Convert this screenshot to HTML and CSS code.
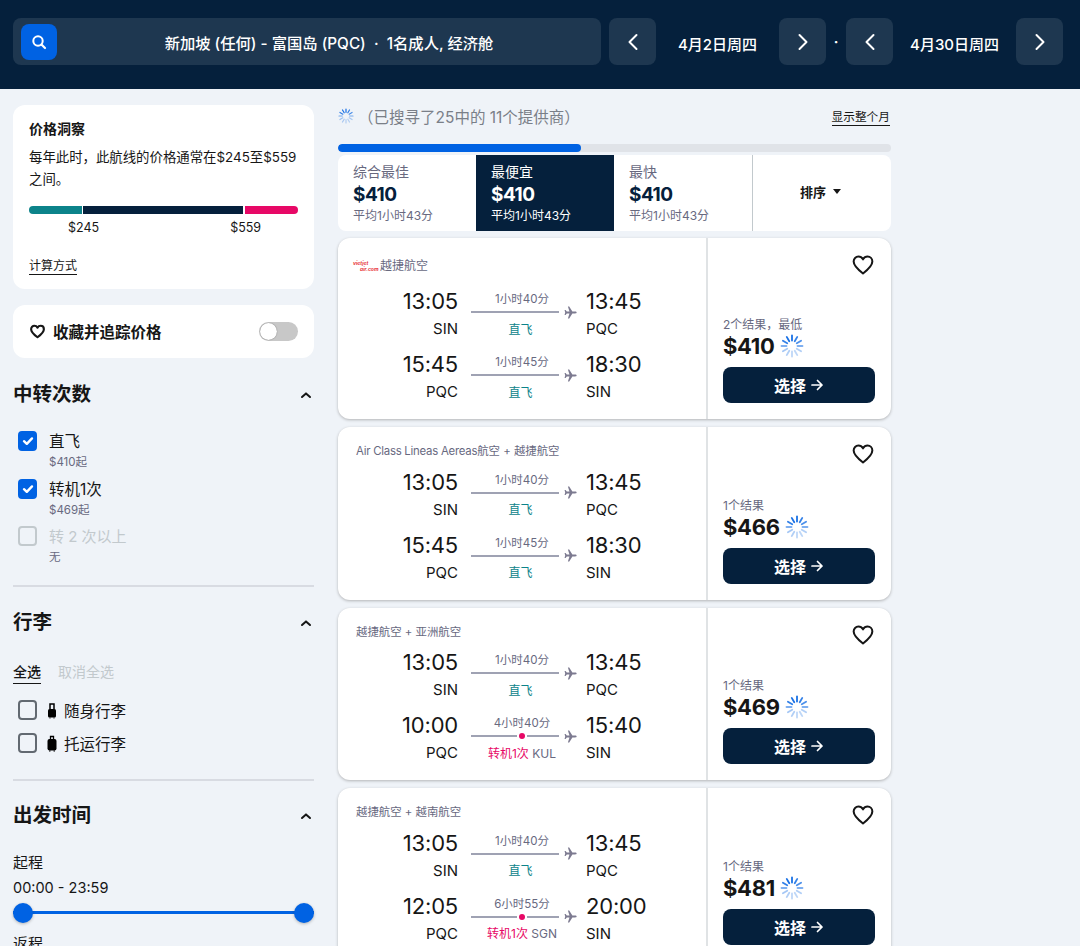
FILE: index.html
```html
<!DOCTYPE html>
<html lang="zh">
<head>
<meta charset="utf-8">
<title>新加坡 - 富国岛 航班</title>
<link rel="stylesheet" href="styles.css">
</head>
<body>
<svg class="defs" width="0" height="0">
	<symbol id="spin" viewBox="0 0 24 24">
		<g stroke="#0062e3" stroke-width="1.8" stroke-linecap="round">
			<line x1="12" y1="1.5" x2="12" y2="6.5" opacity=".9"/>
			<line x1="12" y1="1.5" x2="12" y2="6.5" opacity=".8" transform="rotate(30 12 12)"/>
			<line x1="12" y1="1.5" x2="12" y2="6.5" opacity=".7" transform="rotate(60 12 12)"/>
			<line x1="12" y1="1.5" x2="12" y2="6.5" opacity=".5" transform="rotate(90 12 12)"/>
			<line x1="12" y1="1.5" x2="12" y2="6.5" opacity=".3" transform="rotate(120 12 12)"/>
			<line x1="12" y1="1.5" x2="12" y2="6.5" opacity=".25" transform="rotate(150 12 12)"/>
			<line x1="12" y1="1.5" x2="12" y2="6.5" opacity=".25" transform="rotate(180 12 12)"/>
			<line x1="12" y1="1.5" x2="12" y2="6.5" opacity=".3" transform="rotate(210 12 12)"/>
			<line x1="12" y1="1.5" x2="12" y2="6.5" opacity=".35" transform="rotate(240 12 12)"/>
			<line x1="12" y1="1.5" x2="12" y2="6.5" opacity=".5" transform="rotate(270 12 12)"/>
			<line x1="12" y1="1.5" x2="12" y2="6.5" opacity=".8" transform="rotate(300 12 12)"/>
			<line x1="12" y1="1.5" x2="12" y2="6.5" opacity=".9" transform="rotate(330 12 12)"/>
		</g>
	</symbol>
	<symbol id="plane" viewBox="0 0 14 14">
		<path fill="#7c7a90" d="M13.6 7c0-.6-.7-1-1.6-1H9L5.6.6H4.2L5.9 6H3L1.7 4.4H.6L1.3 7 .6 9.6h1.1L3 8h2.9L4.2 13.4h1.4L9 8h3c.9 0 1.6-.4 1.6-1z"/>
	</symbol>
	<symbol id="heart" viewBox="0 0 24 24">
		<path fill="none" stroke="#161616" stroke-linejoin="round" d="M12 21.2C5.6 16.3 1.8 12.6 1.8 8.2 1.8 5 4.2 2.8 7 2.8c2 0 3.8 1 5 3 1.2-2 3-3 5-3 2.8 0 5.2 2.2 5.2 5.4 0 4.4-3.8 8.1-10.2 13z"/>
	</symbol>
	<symbol id="chev" viewBox="0 0 12 8">
		<path fill="none" stroke="#161616" stroke-width="2" stroke-linecap="round" stroke-linejoin="round" d="M2 6l4-3.600L10 6"/>
	</symbol>
	<symbol id="arrow" viewBox="0 0 14 14">
		<path fill="none" stroke="#fff" stroke-width="1.7" stroke-linecap="round" stroke-linejoin="round" d="M2 7h10M7.500 2.500L12 7l-4.500 4.500"/>
	</symbol>
	<symbol id="tick" viewBox="0 0 14 14">
		<path fill="none" stroke="#fff" stroke-width="2.4" stroke-linecap="round" stroke-linejoin="round" d="M3 7.200l2.800 2.600L11 4.400"/>
	</symbol>
</svg>

<header class="top">
	<div class="search">
		<span class="search-btn">
			<svg width="16" height="16" viewBox="0 0 16 16"><circle cx="7" cy="7" r="4.700" fill="none" stroke="#fff" stroke-width="2"/><path d="M10.500 10.500L14 14" stroke="#fff" stroke-width="2.200" stroke-linecap="round"/></svg>
		</span>
		<span class="search-text">新加坡 (任何) - 富国岛 (PQC) &nbsp;·&nbsp; 1名成人, 经济舱</span>
	</div>
	<a class="nav"><svg width="12" height="18" viewBox="0 0 12 18"><path d="M9.500 2L2.500 9l7 7" fill="none" stroke="#fff" stroke-width="2" stroke-linecap="round" stroke-linejoin="round"/></svg></a>
	<span class="date">4月2日周四</span>
	<a class="nav"><svg width="12" height="18" viewBox="0 0 12 18"><path d="M2.500 2l7 7-7 7" fill="none" stroke="#fff" stroke-width="2" stroke-linecap="round" stroke-linejoin="round"/></svg></a>
	<span class="dot">·</span>
	<a class="nav"><svg width="12" height="18" viewBox="0 0 12 18"><path d="M9.500 2L2.500 9l7 7" fill="none" stroke="#fff" stroke-width="2" stroke-linecap="round" stroke-linejoin="round"/></svg></a>
	<span class="date">4月30日周四</span>
	<a class="nav"><svg width="12" height="18" viewBox="0 0 12 18"><path d="M2.500 2l7 7-7 7" fill="none" stroke="#fff" stroke-width="2" stroke-linecap="round" stroke-linejoin="round"/></svg></a>
</header>

<div class="page">
	<aside class="side">
		<section class="box insight">
			<h4>价格洞察</h4>
			<p>每年此时，此航线的价格通常在$245至$559之间。</p>
			<div class="range"><i class="r1"></i><i class="r2"></i><i class="r3"></i></div>
			<div class="range-labels"><span>$245</span><span>$559</span></div>
			<a class="link">计算方式</a>
		</section>
		<section class="box track">
			<svg width="15" height="15"><use href="#heart"/></svg>
			<b>收藏并追踪价格</b>
			<span class="switch"><i></i></span>
		</section>

		<section class="filter">
			<div class="filter-head"><h3>中转次数</h3><svg width="12" height="8"><use href="#chev"/></svg></div>
			<div class="opt"><span class="check on"><svg width="14" height="14"><use href="#tick"/></svg></span><div class="opt-text"><div class="opt-name">直飞</div><div class="opt-sub">$410起</div></div></div>
			<div class="opt"><span class="check on"><svg width="14" height="14"><use href="#tick"/></svg></span><div class="opt-text"><div class="opt-name">转机1次</div><div class="opt-sub">$469起</div></div></div>
			<div class="opt off"><span class="check"></span><div class="opt-text"><div class="opt-name">转 2 次以上</div><div class="opt-sub">无</div></div></div>
		</section>

		<section class="filter bags">
			<div class="filter-head"><h3>行李</h3><svg width="12" height="8"><use href="#chev"/></svg></div>
			<div class="all"><a class="all-on">全选</a><a class="all-off">取消全选</a></div>
			<div class="bag"><span class="check"></span>
				<svg width="10" height="17" viewBox="0 0 10 17"><path d="M3 7V2h4v5" fill="none" stroke="#000" stroke-width="1.500"/><rect x="1" y="7" width="8" height="8.500" rx="1.500"/><path d="M2.500 15.500h1v1h-1zM6.500 15.500h1v1h-1z"/></svg>
				随身行李</div>
			<div class="bag"><span class="check"></span>
				<svg width="10" height="17" viewBox="0 0 10 17"><path d="M3.500 4V1.500h3V4" fill="none" stroke="#000" stroke-width="1.300"/><rect x=".5" y="4" width="9" height="11.500" rx="2"/><path d="M2 15.500h1.500v1H2zM6.500 15.500H8v1H6.500z"/></svg>
				托运行李</div>
		</section>

		<section class="filter times">
			<div class="filter-head"><h3>出发时间</h3><svg width="12" height="8"><use href="#chev"/></svg></div>
			<div class="slide-name">起程</div>
			<div class="slide-val">00:00 - 23:59</div>
			<div class="slider"><i></i><i></i></div>
			<div class="slide-name">返程</div>
		</section>
	</aside>

	<main class="results">
		<div class="status">
			<svg width="16" height="16"><use href="#spin"/></svg>
			<span class="status-text">（已搜寻了25中的 11个提供商）</span>
			<a class="link">显示整个月</a>
		</div>
		<div class="progress"><i></i></div>
		<div class="tabs">
			<div class="tab"><span class="tab-name">综合最佳</span><strong>$410</strong><small>平均1小时43分</small></div>
			<div class="tab active"><span class="tab-name">最便宜</span><strong>$410</strong><small>平均1小时43分</small></div>
			<div class="tab"><span class="tab-name">最快</span><strong>$410</strong><small>平均1小时43分</small></div>
			<div class="tab sort"><b>排序</b><span class="caret"></span></div>
		</div>

		<article class="card first">
			<div class="trip">
				<div class="carrier"><span class="logo"><em>vietjet</em><em>air.com</em></span>越捷航空</div>
				<div class="leg">
					<span class="time end">13:05</span>
					<div class="mid"><span class="dur">1小时40分</span><div class="line"><i></i><svg width="13" height="13"><use href="#plane"/></svg></div></div>
					<span class="time">13:45</span>
					<span class="code end">SIN</span><span class="stops direct">直飞</span><span class="code">PQC</span>
				</div>
				<div class="leg">
					<span class="time end">15:45</span>
					<div class="mid"><span class="dur">1小时45分</span><div class="line"><i></i><svg width="13" height="13"><use href="#plane"/></svg></div></div>
					<span class="time">18:30</span>
					<span class="code end">PQC</span><span class="stops direct">直飞</span><span class="code">SIN</span>
				</div>
			</div>
			<div class="buy">
				<svg class="fav" width="22" height="22"><use href="#heart"/></svg>
				<div class="deal">2个结果，最低</div>
				<div class="price">$410<svg width="24" height="24"><use href="#spin"/></svg></div>
				<a class="select">选择<svg width="14" height="14"><use href="#arrow"/></svg></a>
			</div>
		</article>

		<article class="card">
			<div class="trip">
				<div class="carrier"><span class="latin">Air Class Lineas Aereas</span>航空 + 越捷航空</div>
				<div class="leg">
					<span class="time end">13:05</span>
					<div class="mid"><span class="dur">1小时40分</span><div class="line"><i></i><svg width="13" height="13"><use href="#plane"/></svg></div></div>
					<span class="time">13:45</span>
					<span class="code end">SIN</span><span class="stops direct">直飞</span><span class="code">PQC</span>
				</div>
				<div class="leg">
					<span class="time end">15:45</span>
					<div class="mid"><span class="dur">1小时45分</span><div class="line"><i></i><svg width="13" height="13"><use href="#plane"/></svg></div></div>
					<span class="time">18:30</span>
					<span class="code end">PQC</span><span class="stops direct">直飞</span><span class="code">SIN</span>
				</div>
			</div>
			<div class="buy">
				<svg class="fav" width="22" height="22"><use href="#heart"/></svg>
				<div class="deal">1个结果</div>
				<div class="price">$466<svg width="24" height="24"><use href="#spin"/></svg></div>
				<a class="select">选择<svg width="14" height="14"><use href="#arrow"/></svg></a>
			</div>
		</article>

		<article class="card">
			<div class="trip">
				<div class="carrier">越捷航空 + 亚洲航空</div>
				<div class="leg">
					<span class="time end">13:05</span>
					<div class="mid"><span class="dur">1小时40分</span><div class="line"><i></i><svg width="13" height="13"><use href="#plane"/></svg></div></div>
					<span class="time">13:45</span>
					<span class="code end">SIN</span><span class="stops direct">直飞</span><span class="code">PQC</span>
				</div>
				<div class="leg">
					<span class="time end">10:00</span>
					<div class="mid"><span class="dur">4小时40分</span><div class="line"><i class="stub"></i><b class="via"></b><i></i><svg width="13" height="13"><use href="#plane"/></svg></div></div>
					<span class="time">15:40</span>
					<span class="code end">PQC</span><span class="stops"><span class="pink">转机1次</span> KUL</span><span class="code">SIN</span>
				</div>
			</div>
			<div class="buy">
				<svg class="fav" width="22" height="22"><use href="#heart"/></svg>
				<div class="deal">1个结果</div>
				<div class="price">$469<svg width="24" height="24"><use href="#spin"/></svg></div>
				<a class="select">选择<svg width="14" height="14"><use href="#arrow"/></svg></a>
			</div>
		</article>

		<article class="card">
			<div class="trip">
				<div class="carrier">越捷航空 + 越南航空</div>
				<div class="leg">
					<span class="time end">13:05</span>
					<div class="mid"><span class="dur">1小时40分</span><div class="line"><i></i><svg width="13" height="13"><use href="#plane"/></svg></div></div>
					<span class="time">13:45</span>
					<span class="code end">SIN</span><span class="stops direct">直飞</span><span class="code">PQC</span>
				</div>
				<div class="leg">
					<span class="time end">12:05</span>
					<div class="mid"><span class="dur">6小时55分</span><div class="line"><i class="stub"></i><b class="via"></b><i></i><svg width="13" height="13"><use href="#plane"/></svg></div></div>
					<span class="time">20:00</span>
					<span class="code end">PQC</span><span class="stops"><span class="pink">转机1次</span> SGN</span><span class="code">SIN</span>
				</div>
			</div>
			<div class="buy">
				<svg class="fav" width="22" height="22"><use href="#heart"/></svg>
				<div class="deal">1个结果</div>
				<div class="price">$481<svg width="24" height="24"><use href="#spin"/></svg></div>
				<a class="select">选择<svg width="14" height="14"><use href="#arrow"/></svg></a>
			</div>
		</article>
	</main>
</div>
</body>
</html>
```

FILE: styles.css
```css
*{margin:0; padding:0; box-sizing:border-box;}
html,body{height:946px; overflow:hidden;}
body{background:#eff3f8; color:#161616; font-family:"Inter","Noto Sans CJK SC",sans-serif; font-size:14px;}
a{color:inherit; text-decoration:none;}
.defs{position:absolute;}
svg{display:block; flex:none;}

/* top bar */
.top{height:89px; background:#05203c; padding:18px 17px 0 13px; display:flex; align-items:flex-start; color:#fff;}
.search{width:588px; height:47px; background:#1e3750; border-radius:8px; display:flex; align-items:center; padding-left:8px; margin-right:8px;}
.search-btn{width:36px; height:36px; background:#0062e3; border-radius:8px; display:flex; align-items:center; justify-content:center;}
.search-text{flex:1; text-align:center; font-size:15.3px; font-weight:500;}
.nav{width:47px; height:47px; background:#1e3750; border-radius:8px; display:flex; align-items:center; justify-content:center;}
.date{width:123px; font-size:15px; font-weight:500; line-height:47px; text-align:center; padding-top:3px;}
.dot{width:20px; text-align:center; line-height:47px; font-weight:700;}

.page{display:flex; align-items:flex-start; padding-left:13px; gap:24px;}

/* left column */
.side{width:301px; padding-top:16px; flex:none;}
.box{background:#fff; border-radius:12px;}
.insight{height:184px; padding:15px 12px 15px 16px;}
.insight h4{font-size:14px; font-weight:700; line-height:18px;}
.insight p{font-size:13.4px; line-height:22px; margin-top:8px;}
.range{display:flex; gap:1px; height:8px; margin-top:16px; width:269px;}
.range i{display:block; height:8px;}
.r1{width:53px; background:#0c838a; border-radius:4px 0 0 4px;}
.r2{width:160px; background:#05203c; margin-right:1px;}
.r3{width:53px; background:#e70866; border-radius:0 4px 4px 0;}
.range-labels{display:flex; font-size:12.5px; line-height:20px; margin-top:4px; height:20px; padding-left:39px; gap:131px;}
.link{display:inline-block; font-size:12px; line-height:16px; border-bottom:1px solid #161616;}
.insight .link{margin-top:20px;}
.track{height:53px; margin-top:16px; display:flex; align-items:center; padding:0 16px 0 17px; stroke-width:3.4;}
.track b{font-size:15.5px; font-weight:700; margin-left:8px; flex:1; padding-bottom:2px;}
.switch{width:39px; height:19px; background:#c8c8c8; border-radius:10px; padding:1px;}
.switch i{display:block; width:17px; height:17px; border-radius:50%; background:#fff; box-shadow:0 0 1px rgba(0,0,0,.6);}

.filter{border-bottom:2px solid #d8dbe2; padding-bottom:11px;}
.filter-head{display:flex; align-items:center; justify-content:space-between; padding:22px 2px 0 0; height:50px;}
.filter-head h3{font-size:19.5px; font-weight:700; line-height:28px;}
.filter-head svg{margin-top:1px;}
.opt{display:flex; gap:12px; padding-left:5px; height:47.5px;}
.filter .opt:nth-child(2){margin-top:23px;}
.opt-text{padding-top:1px;}
.opt-name{font-size:15.5px; line-height:20px;}
.opt-sub{font-size:11.5px; line-height:18px; color:#68697f; margin-top:1px;}
.check{width:19px; height:20px; border-radius:4px; border:2px solid #626971; background:transparent; display:flex; align-items:center; justify-content:center; flex:none;}
.check.on{background:#0062e3; border-color:#0062e3;}
.opt.off .check{border-color:#c2c9cd;}
.opt.off .opt-name{color:#c2c9cd; font-size:15px;}

.bags{padding-bottom:19px;}
.bags .filter-head{padding-top:0; margin-top:11px; height:49px;}
.all{display:flex; gap:17px; font-size:14px; line-height:18px; margin-top:16px;}
.all-on{font-weight:500; border-bottom:1px solid #161616; padding-bottom:2px;}
.all-off{color:#c2c9cd;}
.bag{display:flex; align-items:center; padding-left:5px; font-size:15.5px; height:33px;}
.all + .bag{margin-top:10px;}
.bag svg{margin:0 7px 0 10px;}

.times{border:0;}
.times .filter-head{padding-top:0; margin-top:10px; height:49px;}
.slide-name{font-size:15px; line-height:22px; margin-top:12px;}
.slide-val{font-size:14.5px; line-height:20px; margin-top:4px;}
.slider{height:20px; margin-top:5px; display:flex; justify-content:space-between; align-items:center; background:linear-gradient(#0062e3,#0062e3) center/100% 3px no-repeat;}
.slider i{width:20px; height:20px; border-radius:50%; background:#0062e3; box-shadow:0 1px 3px rgba(37,32,31,.3);}
.slider + .slide-name{margin-top:10px;}

/* results */
.results{width:553px; flex:none;}
.status{height:55px; display:flex; align-items:center; padding-bottom:1px;}
.status-text{flex:1; font-size:15.5px; color:#7a7f88; margin-left:4px;}
.status .link{margin-right:1px; font-size:11.7px; margin-top:2px;}
.progress{height:8px; background:#e0e3e8; border-radius:4px; overflow:hidden;}
.progress i{display:block; width:243px; height:8px; background:#0062e3; border-radius:4px;}
.tabs{display:flex; height:76px; background:#fff; margin-top:3px; margin-bottom:7px; overflow:hidden; border-radius:8px;}
.tab{width:138px; padding:8px 16px 0 15px; display:flex; flex-direction:column; color:#68697f;}
.tab-name{font-size:14px; line-height:18px;}
.tab strong{font-size:19px; letter-spacing:-.5px; font-weight:700; line-height:26px; color:#05203c; margin-top:1px;}
.tab small{font-size:12px; line-height:16px;}
.tab.active{background:#05203c; color:#fff;}
.tab.active strong{color:#fff;}
.sort{flex:1; border-left:1px solid #c2c9cd; flex-direction:row; align-items:center; justify-content:center; gap:7px; color:#161616; padding:0 3px 4px 0;}
.sort b{font-size:13px; font-weight:700;}
.caret{width:0; height:0; border:4.5px solid transparent; border-top:5px solid #161616; border-bottom:0;}

.card{display:flex; height:172.5px; background:#fff; border-radius:12px; box-shadow:0 1px 3px rgba(37,32,31,.3); margin-bottom:8px;}
.card.first{height:181px;}
.trip{width:368px; padding:15px 0 0 18px;}
.carrier{height:18px; line-height:18px; font-size:11.4px; color:#68697f; margin-bottom:4.5px; display:flex; align-items:center;}
.first .carrier{height:26px; margin-bottom:5px; margin-left:-3px; font-size:12px;}
.latin{letter-spacing:-.25px;}
.logo{width:24px; height:12px; margin-right:3px; display:flex; flex-direction:column; color:#e8343a; font-size:5px; line-height:6px; font-weight:700;}
.logo em{display:block;}
.logo em + em{padding-left:7px;}
.leg{height:63px; display:grid; grid-template-columns:102px 102px 1fr; column-gap:13px; grid-template-rows:34px 22px; align-items:center;}
.time{font-size:22px; letter-spacing:-.2px; line-height:34px;}
.code{font-size:15px; line-height:22px;}
.end{text-align:right;}
.mid{height:34px; padding-top:7px;}
.dur{display:block; text-align:center; font-size:11.5px; line-height:16px; color:#68697f;}
.line{display:flex; align-items:center; height:14px; margin-top:-2px;}
.line i{flex:1; height:2px; background:#9fa2b3;}
.line .stub{flex:none; width:46px;}
.line svg{margin-left:5px; margin-right:-4px;}
.via{width:6px; height:6px; border-radius:50%; background:#e70866; box-shadow:0 0 0 2px #fff; margin:0 2px;}
.stops{text-align:center; font-size:12px; color:#68697f; white-space:nowrap; margin-top:-2px;}
.direct{color:#0c838a; padding-right:3px;}
.pink{color:#e70866;}

.buy{flex:1; border-left:2px solid #e0e3e5; padding:16px 16px 16px 15px; display:flex; flex-direction:column;}
.fav{align-self:flex-end; margin:0 1px auto 0; stroke-width:2.2;}
.deal{font-size:12px; line-height:16px; color:#68697f;}
.price{display:flex; align-items:center; gap:5px; font-size:22px; letter-spacing:-.3px; font-weight:700; line-height:26px; margin-bottom:8px;}
.select{height:36px; background:#05203c; color:#fff; border-radius:8px; display:flex; align-items:center; justify-content:center; font-size:16px; font-weight:700; gap:4px;}
```
